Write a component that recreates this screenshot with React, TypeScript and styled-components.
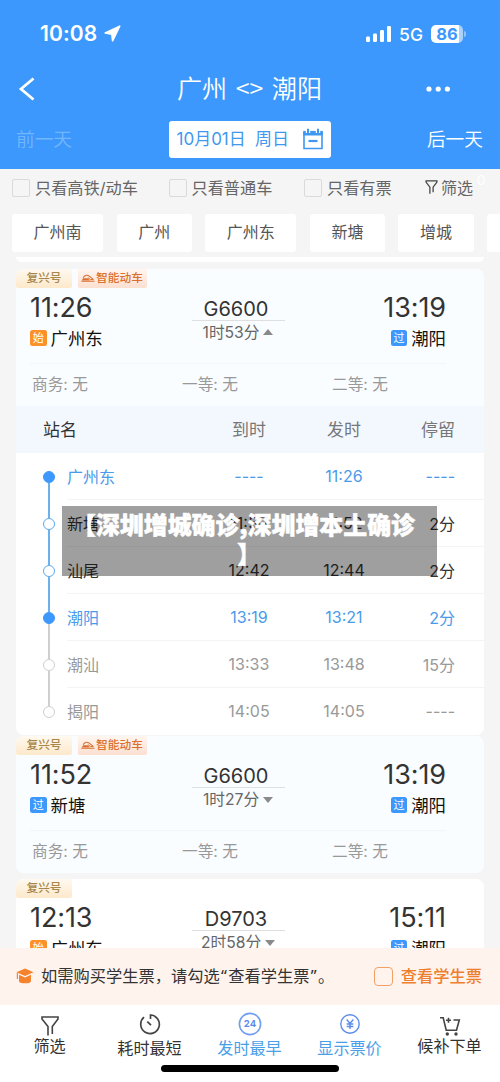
import React from 'react';
import styled, { createGlobalStyle, css } from 'styled-components';

const BLUE = '#3c98fc';
const LINK = '#4a9fe8';

const Global = createGlobalStyle`
  * { box-sizing: border-box; }
  body { margin: 0; background: #f5f5f5; }
  #root { font-family: Inter, "Noto Sans CJK SC", sans-serif; color: #333; }
`;

const Screen = styled.div`
  position: relative;
  display: flex;
  flex-direction: column;
  width: 500px;
  height: 1082px;
  overflow: hidden;
  background: #f5f5f5;
  white-space: nowrap;
`;

/* Header */
const Header = styled.header`
  flex: none;
  height: 168.5px;
  background: ${BLUE};
  color: #fff;
`;
const StatusBar = styled.div`
  display: flex;
  align-items: center;
  height: 66px;
  padding: 1px 34px 0 40px;
`;
const Clock = styled.span`
  font-size: 21px;
  font-weight: 600;
  letter-spacing: 0.1px;
  margin-right: 7px;
`;
const StatusRight = styled.div`
  display: flex;
  align-items: center;
  margin-left: auto;
`;
const Network = styled.span`
  font-size: 17.5px;
  font-weight: 500;
  margin: 1px 8px 0 8px;
`;
const Battery = styled.span`
  width: 32px;
  height: 18px;
  border-radius: 5px;
  background: linear-gradient(90deg, #fff 86%, #a9d2fd 86%);
  color: ${BLUE};
  font-size: 16.5px;
  font-weight: 700;
  line-height: 18px;
  text-align: center;
`;
const BatteryTip = styled.span`
  width: 2px;
  height: 6px;
  margin-left: 1px;
  border-radius: 0 2px 2px 0;
  background: #8fc4fd;
`;
const TitleBar = styled.div`
  display: grid;
  grid-template-columns: 60px 1fr 60px;
  align-items: center;
  height: 46px;
  padding: 0 19px 0 18px;
  svg:last-child { margin-left: 2.5px; }
`;
const Title = styled.h1`
  margin: 0;
  padding-bottom: 3px;
  font-family: "Noto Sans CJK SC", sans-serif;
  font-size: 25.1px;
  font-weight: 350;
  line-height: 43px;
  word-spacing: 3px;
  text-align: center;
`;
const DateBar = styled.div`
  display: flex;
  justify-content: space-between;
  align-items: center;
  height: 37px;
  margin-top: 8.5px;
  padding: 0 17px 0 16px;
`;
const DayLink = styled.span<{ $off?: boolean }>`
  padding-bottom: 4px;
  font-size: 18.7px;
  font-weight: 350;
  color: ${p => (p.$off ? '#74b6fd' : '#fff')};
`;
const DateBox = styled.div`
  display: flex;
  align-items: center;
  justify-content: space-between;
  width: 162px;
  height: 37px;
  padding: 0 7px 0 8px;
  border-radius: 3px;
  background: #fff;
  color: #3f98ef;
  font-size: 17px;
  word-spacing: 4.5px;
  span { padding-bottom: 3px; }
`;

/* Filters */
const Filters = styled.div`
  display: flex;
  align-items: center;
  flex: none;
  height: 38px;
  padding-left: 12px;
  color: #666;
`;
const CheckItem = styled.label<{ $w: number }>`
  display: flex;
  align-items: center;
  gap: 5px;
  width: ${p => p.$w}px;
  font-size: 16.2px;
  span + span { padding-bottom: 2px; }
`;
const Box = styled.span<{ $accent?: boolean }>`
  flex: none;
  width: 18px;
  height: 18px;
  border: 1.5px solid #dadada;
  border-radius: 2px;
  ${p => p.$accent && css`
    width: 19px;
    height: 19px;
    border-color: #f3a067;
    border-radius: 4px;
  `}
`;
const FilterButton = styled.span`
  display: flex;
  align-items: center;
  gap: 3px;
  padding-bottom: 2px;
  font-size: 16px;
`;
const Count = styled.span`
  align-self: flex-start;
  margin: 3px 0 0 4px;
  color: #fff;
  font-size: 13px;
`;
const Chips = styled.div`
  display: flex;
  flex: none;
  gap: 13.4px;
  padding: 7.5px 0 5px 12px;
  overflow: hidden;
`;
const Chip = styled.span`
  flex: none;
  height: 38px;
  padding: 0 21.6px;
  border-radius: 3px;
  background: #fff;
  color: #555;
  font-size: 16px;
  line-height: 37px;
`;

/* Trains */
const List = styled.main`
  flex: 1;
  min-height: 0;
  overflow: hidden;
  padding: 0 16px;
`;
const CardEnd = styled.div`
  height: 5px;
  margin-bottom: 6.5px;
  border-radius: 0 0 8px 8px;
  background: #fff;
`;
const Card = styled.section<{ $plain?: boolean; $gap: number }>`
  overflow: hidden;
  margin-bottom: ${p => p.$gap}px;
  border-radius: 8px;
  background: ${p => (p.$plain ? '#fff' : '#fafdff')};
`;
const Tags = styled.div`
  display: flex;
  gap: 6px;
  height: 19px;
  font-size: 11.7px;
  line-height: 18px;
`;
const Tag = styled.span<{ $smart?: boolean }>`
  display: flex;
  align-items: center;
  justify-content: center;
  width: 56px;
  border-radius: 0 0 2px 2px;
  background: linear-gradient(#fff9f0, #fde9cb);
  color: #a8874a;
  font-weight: 500;
  ${p => p.$smart && css`
    gap: 1px;
    width: 69px;
    padding-right: 1px;
    background: linear-gradient(#fff6f0, #fcdfd0);
    color: #d9702f;
  `}
`;
const Trip = styled.div`
  display: grid;
  grid-template-columns: 1fr 93px 1fr;
  height: 76px;
  margin: 0 38px 0 14px;
  border-bottom: 1px solid #f3f5f7;
`;
const End = styled.div<{ $right?: boolean }>`
  display: flex;
  flex-direction: column;
  align-items: ${p => (p.$right ? 'flex-end' : 'flex-start')};
  padding-top: 6.7px;
`;
const Time = styled.span`
  height: 28px;
  font-size: 27px;
  line-height: 28px;
  letter-spacing: -0.1px;
`;
const Station = styled.span`
  display: flex;
  align-items: center;
  gap: 4px;
  height: 24px;
  margin-top: 3.2px;
  color: #111;
  font-size: 17.4px;
`;
const Badge = styled.span<{ $start?: boolean }>`
  width: 16.5px;
  height: 16.5px;
  margin-top: 1.5px;
  border-radius: 2.5px;
  background: ${p => (p.$start ? '#fb9128' : BLUE)};
  color: #fff;
  font-size: 11px;
  line-height: 16px;
  text-align: center;
`;
const Middle = styled.div`
  display: flex;
  flex-direction: column;
  align-items: center;
  padding-top: 10px;
`;
const TrainNo = styled.span`
  height: 22px;
  padding-right: 4px;
  font-size: 20px;
  line-height: 22px;
`;
const Track = styled.span`
  width: 93px;
  height: 1px;
  background: #dedfe1;
`;
const Duration = styled.span`
  display: flex;
  align-items: center;
  gap: 4px;
  height: 22px;
  color: #666;
  font-size: 15.7px;
`;
const Caret = styled.i<{ $up?: boolean }>`
  border: 5px solid transparent;
  ${p => (p.$up
    ? 'border-bottom: 6px solid #8a8a8a; border-top: 0;'
    : 'border-top: 6px solid #8a8a8a; border-bottom: 0; margin-top: 3px;')}
`;
const Seats = styled.div`
  display: grid;
  grid-template-columns: 150px 150px 1fr;
  align-items: center;
  height: 42px;
  padding: 0 0 2px 16px;
  color: #999;
  font-size: 15.7px;
`;

/* Stops */
const columns = css`
  display: grid;
  align-items: center;
`;
const StopsHead = styled.div`
  ${columns}
  height: 47.5px;
  padding: 0 29px 2px 27px;
  grid-template-columns: 158.5px 95px 95px 1fr;
  background: #f3f8ff;
  color: #777;
  font-size: 17px;
`;
const StopRow = styled.div<{ $color: string }>`
  display: flex;
  height: 47px;
  padding-left: 27px;
  background: #fff;
  color: ${p => p.$color};
  font-size: 16px;
`;
const Rail = styled.span`
  display: flex;
  flex-direction: column;
  align-items: center;
  width: 12px;
  margin-right: 12px;
`;
const RailLine = styled.i<{ $c: string }>`
  flex: 1;
  width: 2px;
  background: ${p => p.$c};
`;
const Dot = styled.i<{ $c: string; $fill?: boolean }>`
  width: 12px;
  height: 12px;
  border: 1.5px solid ${p => p.$c};
  border-radius: 50%;
  background: ${p => (p.$fill ? p.$c : '#fff')};
`;
const StopCells = styled.div<{ $last?: boolean }>`
  ${columns}
  flex: 1;
  padding: 0 29px 1px 0;
  grid-template-columns: 134.5px 95px 95px 1fr;
  border-bottom: 1px solid ${p => (p.$last ? 'transparent' : '#f4f4f4')};
`;
const Cell = styled.span<{ $align?: string; $dark?: boolean }>`
  text-align: ${p => p.$align || 'left'};
  ${p => p.$dark && 'color: #333;'}
`;

/* Caption over the list */
const Caption = styled.div`
  position: absolute;
  left: 62px;
  top: 506px;
  width: 375px;
  height: 70px;
  padding: 4px 10px 0 9px;
  background: rgba(0, 0, 0, 0.376);
  color: #fff;
  font-family: "Noto Sans CJK SC", sans-serif;
  font-size: 23.9px;
  font-weight: 900;
  line-height: 28.8px;
  text-align: center;
  -webkit-text-stroke: 0.5px #fff;
`;
const CaptionLine = styled.span`
  display: block;
  padding-right: 11px;
`;

/* Bottom */
const Notice = styled.div`
  display: flex;
  align-items: center;
  flex: none;
  height: 56.5px;
  padding: 0 18px 0 16px;
  background: #fff3ee;
  font-size: 16.25px;
`;
const NoticeText = styled.span`
  margin-left: 7px;
  padding-bottom: 2px;
`;
const Quote = styled.span`
  display: inline-block;
  width: 8.5px;
  font-family: "Noto Sans", sans-serif;
  text-align: center;
`;
const StudentCheck = styled.label`
  display: flex;
  align-items: center;
  gap: 8px;
  margin-left: auto;
  color: #ee7f2e;
  font-weight: 500;
  span + span { padding-bottom: 2px; }
`;
const TabBar = styled.nav`
  display: grid;
  grid-template-columns: repeat(5, 100px);
  flex: none;
  height: 60.5px;
  background: #fff;
`;
const Tab = styled.span<{ $active?: boolean; $up?: boolean }>`
  display: flex;
  flex-direction: column;
  align-items: center;
  padding: 7px 1px 0 0;
  color: ${p => (p.$active ? LINK : '#333')};
  font-size: 16.1px;
  line-height: 24px;
  svg { flex: none; margin-bottom: ${p => (p.$up ? -2 : 0)}px; }
`;
const HomeArea = styled.div`
  display: flex;
  justify-content: center;
  flex: none;
  height: 17px;
  background: #fff;
`;
const HomeBar = styled.span`
  width: 178px;
  height: 6.5px;
  border-radius: 4px;
  background: #000;
`;

const Funnel = ({ w, h }: { w: number; h: number }) => (
  <svg width={w} height={h} viewBox="0 0 18 20" fill="none" stroke="#444" strokeWidth="1.8">
    <path d="M6.7 19.5V10.3L1.2 3V1.2H16.8V3L11.3 10.3V17.5" />
  </svg>
);
const TrainIcon = () => (
  <svg width="14" height="8" viewBox="0 0 14 8" fill="none" stroke="#d9702f">
    <path d="M.3 7.3H13.5" strokeWidth="1.1" />
    <path d="M2.2 3.6C4 .8 6.5 .8 8.2 2.2L12.2 5.4" strokeWidth="1.1" />
    <path d="M.8 6.4L2 4.2H6.6L9 6.4Z" fill="#d9702f" stroke="none" />
    <path d="M6.8 3.6L9.6 5.6H12.6" strokeWidth="1" />
  </svg>
);

type TrainProps = {
  no: string; from: string; to: string; dep: string; arr: string; time: string;
  start?: boolean; smart?: boolean; open?: boolean;
};
const Train = ({ no, from, to, dep, arr, time, start, smart, open }: TrainProps) => (
  <>
    <Tags>
      <Tag>复兴号</Tag>
      {smart && <Tag $smart><TrainIcon />智能动车</Tag>}
    </Tags>
    <Trip>
      <End>
        <Time>{dep}</Time>
        <Station><Badge $start={start}>{start ? '始' : '过'}</Badge>{from}</Station>
      </End>
      <Middle>
        <TrainNo>{no}</TrainNo>
        <Track />
        <Duration>{time}<Caret $up={open} /></Duration>
      </Middle>
      <End $right>
        <Time>{arr}</Time>
        <Station><Badge>过</Badge>{to}</Station>
      </End>
    </Trip>
    <Seats><span>商务: 无</span><span>一等: 无</span><span>二等: 无</span></Seats>
  </>
);

const GREY = '#cfcfcf';
const RAIL = '#6db1ec';
const stops = [
  { name: '广州东', arr: '----', dep: '11:26', stay: '----', c: '#4a9bea', dot: BLUE, fill: true, up: 'transparent', down: RAIL },
  { name: '新塘', arr: '11:50', dep: '11:52', stay: '2分', c: '#333', dot: '#5aa8f0', up: RAIL, down: RAIL },
  { name: '汕尾', arr: '12:42', dep: '12:44', stay: '2分', c: '#333', dot: '#5aa8f0', up: RAIL, down: RAIL },
  { name: '潮阳', arr: '13:19', dep: '13:21', stay: '2分', c: '#4a9bea', dot: BLUE, fill: true, up: RAIL, down: GREY },
  { name: '潮汕', arr: '13:33', dep: '13:48', stay: '15分', c: '#999', dot: GREY, up: GREY, down: GREY },
  { name: '揭阳', arr: '14:05', dep: '14:05', stay: '----', c: '#999', dot: GREY, up: GREY, down: 'transparent' },
];

export default function App() {
  return (
    <Screen>
      <Global />
      <Header>
        <StatusBar>
          <Clock>10:08</Clock>
          <svg width="17" height="17" viewBox="0 0 17 17"><path d="M15.7 1.2L8.6 15.8L7.8 9.1L1.2 7.9Z" fill="#fff" stroke="#fff" strokeWidth="1.6" strokeLinejoin="round" /></svg>
          <StatusRight>
            <svg width="25" height="16" viewBox="0 0 25 16" fill="#fff">
              <rect x="0" y="10.5" width="4" height="5.5" rx="1.2" />
              <rect x="7" y="7.5" width="4" height="8.5" rx="1.2" />
              <rect x="14" y="4" width="4" height="12" rx="1.2" />
              <rect x="21" y="0" width="4" height="16" rx="1.2" />
            </svg>
            <Network>5G</Network>
            <Battery>86</Battery>
            <BatteryTip />
          </StatusRight>
        </StatusBar>
        <TitleBar>
          <svg width="18" height="24" viewBox="0 0 18 24" fill="none" stroke="#fff" strokeWidth="2.8"><path d="M15.5 1.5L3 12L15.5 22.5" /></svg>
          <Title>广州 &lt;&gt; 潮阳</Title>
          <svg width="26" height="6" viewBox="0 0 26 6" fill="#fff"><circle cx="5" cy="3" r="2.6" /><circle cx="14.2" cy="3" r="2.6" /><circle cx="23.4" cy="3" r="2.6" /></svg>
        </TitleBar>
        <DateBar>
          <DayLink $off>前一天</DayLink>
          <DateBox>
            <span>10月01日 周日</span>
            <svg width="22" height="22" viewBox="0 0 22 22" fill="none" stroke="#3f98ef" strokeWidth="1.6">
              <path d="M2 4V20.5H20V4" /><path d="M1.2 5.2H20.8" strokeWidth="4.6" /><path d="M6 .5V5M16 .5V5" stroke="#fff" strokeWidth="4.4" /><path d="M6 .8V5M16 .8V5" strokeWidth="2" /><path d="M6.5 13H15.5" strokeWidth="2.2" />
            </svg>
          </DateBox>
          <DayLink>后一天</DayLink>
        </DateBar>
      </Header>
      <Filters>
        <CheckItem $w={156.5}><Box /><span>只看高铁/动车</span></CheckItem>
        <CheckItem $w={135.5}><Box /><span>只看普通车</span></CheckItem>
        <CheckItem $w={121}><Box /><span>只看有票</span></CheckItem>
        <FilterButton><Funnel w={13} h={14} />筛选</FilterButton>
        <Count>0</Count>
      </Filters>
      <Chips>
        {['广州南', '广州', '广州东', '新塘', '增城', ''].map((n, i) => <Chip key={i}>{n}</Chip>)}
      </Chips>
      <List>
        <CardEnd />
        <Card $gap={0.5}>
          <Train no="G6600" from="广州东" to="潮阳" dep="11:26" arr="13:19" time="1时53分" start smart open />
          <StopsHead>
            <Cell $dark>站名</Cell>
            <Cell $align="center">到时</Cell>
            <Cell $align="center">发时</Cell>
            <Cell $align="right">停留</Cell>
          </StopsHead>
          {stops.map((s, i) => (
            <StopRow key={s.name} $color={s.c}>
              <Rail><RailLine $c={s.up} /><Dot $c={s.dot} $fill={s.fill} /><RailLine $c={s.down} /></Rail>
              <StopCells $last={i === stops.length - 1}>
                <Cell>{s.name}</Cell>
                <Cell $align="center">{s.arr}</Cell>
                <Cell $align="center">{s.dep}</Cell>
                <Cell $align="right">{s.stay}</Cell>
              </StopCells>
            </StopRow>
          ))}
        </Card>
        <Card $gap={6}>
          <Train no="G6600" from="新塘" to="潮阳" dep="11:52" arr="13:19" time="1时27分" smart />
        </Card>
        <Card $gap={0} $plain>
          <Train no="D9703" from="广州东" to="潮阳" dep="12:13" arr="15:11" time="2时58分" start />
        </Card>
      </List>
      <Notice>
        <svg width="18" height="16" viewBox="0 0 18 16" fill="#f5832d">
          <path d="M9 .5L17.6 4.2L9 8L.4 4.2Z" />
          <path d="M3 6.8L9 9.4L15 6.8V13Q15 15.3 9 15.3T3 13Z" />
          <path d="M.8 5V11H2V5Z" />
        </svg>
        <NoticeText>如需购买学生票，请勾选<Quote>“</Quote>查看学生票<Quote>”</Quote>。</NoticeText>
        <StudentCheck><Box $accent /><span>查看学生票</span></StudentCheck>
      </Notice>
      <TabBar>
        <Tab $up>
          <svg width="24" height="24" viewBox="0 0 24 24" fill="none" stroke="#444" strokeWidth="1.6"><path d="M10 23.5V14.5L4 7V5H20V7L14.3 14.5V22" /></svg>
          筛选
        </Tab>
        <Tab>
          <svg width="24" height="24" viewBox="0 0 24 24" fill="none" stroke="#444" strokeWidth="1.7"><path d="M12.5 7V3A9.3 9.3 0 1 1 6 5.2" /><path d="M9.3 9.7L13 13.2" /></svg>
          耗时最短
        </Tab>
        <Tab $active>
          <svg width="24" height="24" viewBox="0 0 24 24" fill="none" stroke="#6f9df0" strokeWidth="1.6"><circle cx="12" cy="12" r="10.6" /><text x="12" y="15.4" textAnchor="middle" fontSize="9.5" fontWeight="700" fill="#5b8ded" stroke="none">24</text></svg>
          发时最早
        </Tab>
        <Tab $active>
          <svg width="24" height="24" viewBox="0 0 24 24" fill="none" stroke="#5b8ded" strokeWidth="1.4"><circle cx="12" cy="12" r="9.2" /><path d="M8.7 7.5L12 11.5L15.3 7.5M12 11.5V17M8.7 12H15.3M8.7 14.5H15.3" /></svg>
          显示票价
        </Tab>
        <Tab $up>
          <svg width="24" height="24" viewBox="0 0 24 24" fill="none" stroke="#444" strokeWidth="1.6"><path d="M2 5.8H5.2L8.2 18.2H18.5L21.3 8H15.5M8 8.3H13M10.5 5.8V10.8" /><circle cx="9.3" cy="22" r=".9" fill="#444" /><circle cx="18" cy="22" r=".9" fill="#444" /></svg>
          候补下单
        </Tab>
      </TabBar>
      <HomeArea><HomeBar /></HomeArea>
      <Caption><CaptionLine>【深圳增城确诊,深圳增本土确诊</CaptionLine>】</Caption>
    </Screen>
  );
}
